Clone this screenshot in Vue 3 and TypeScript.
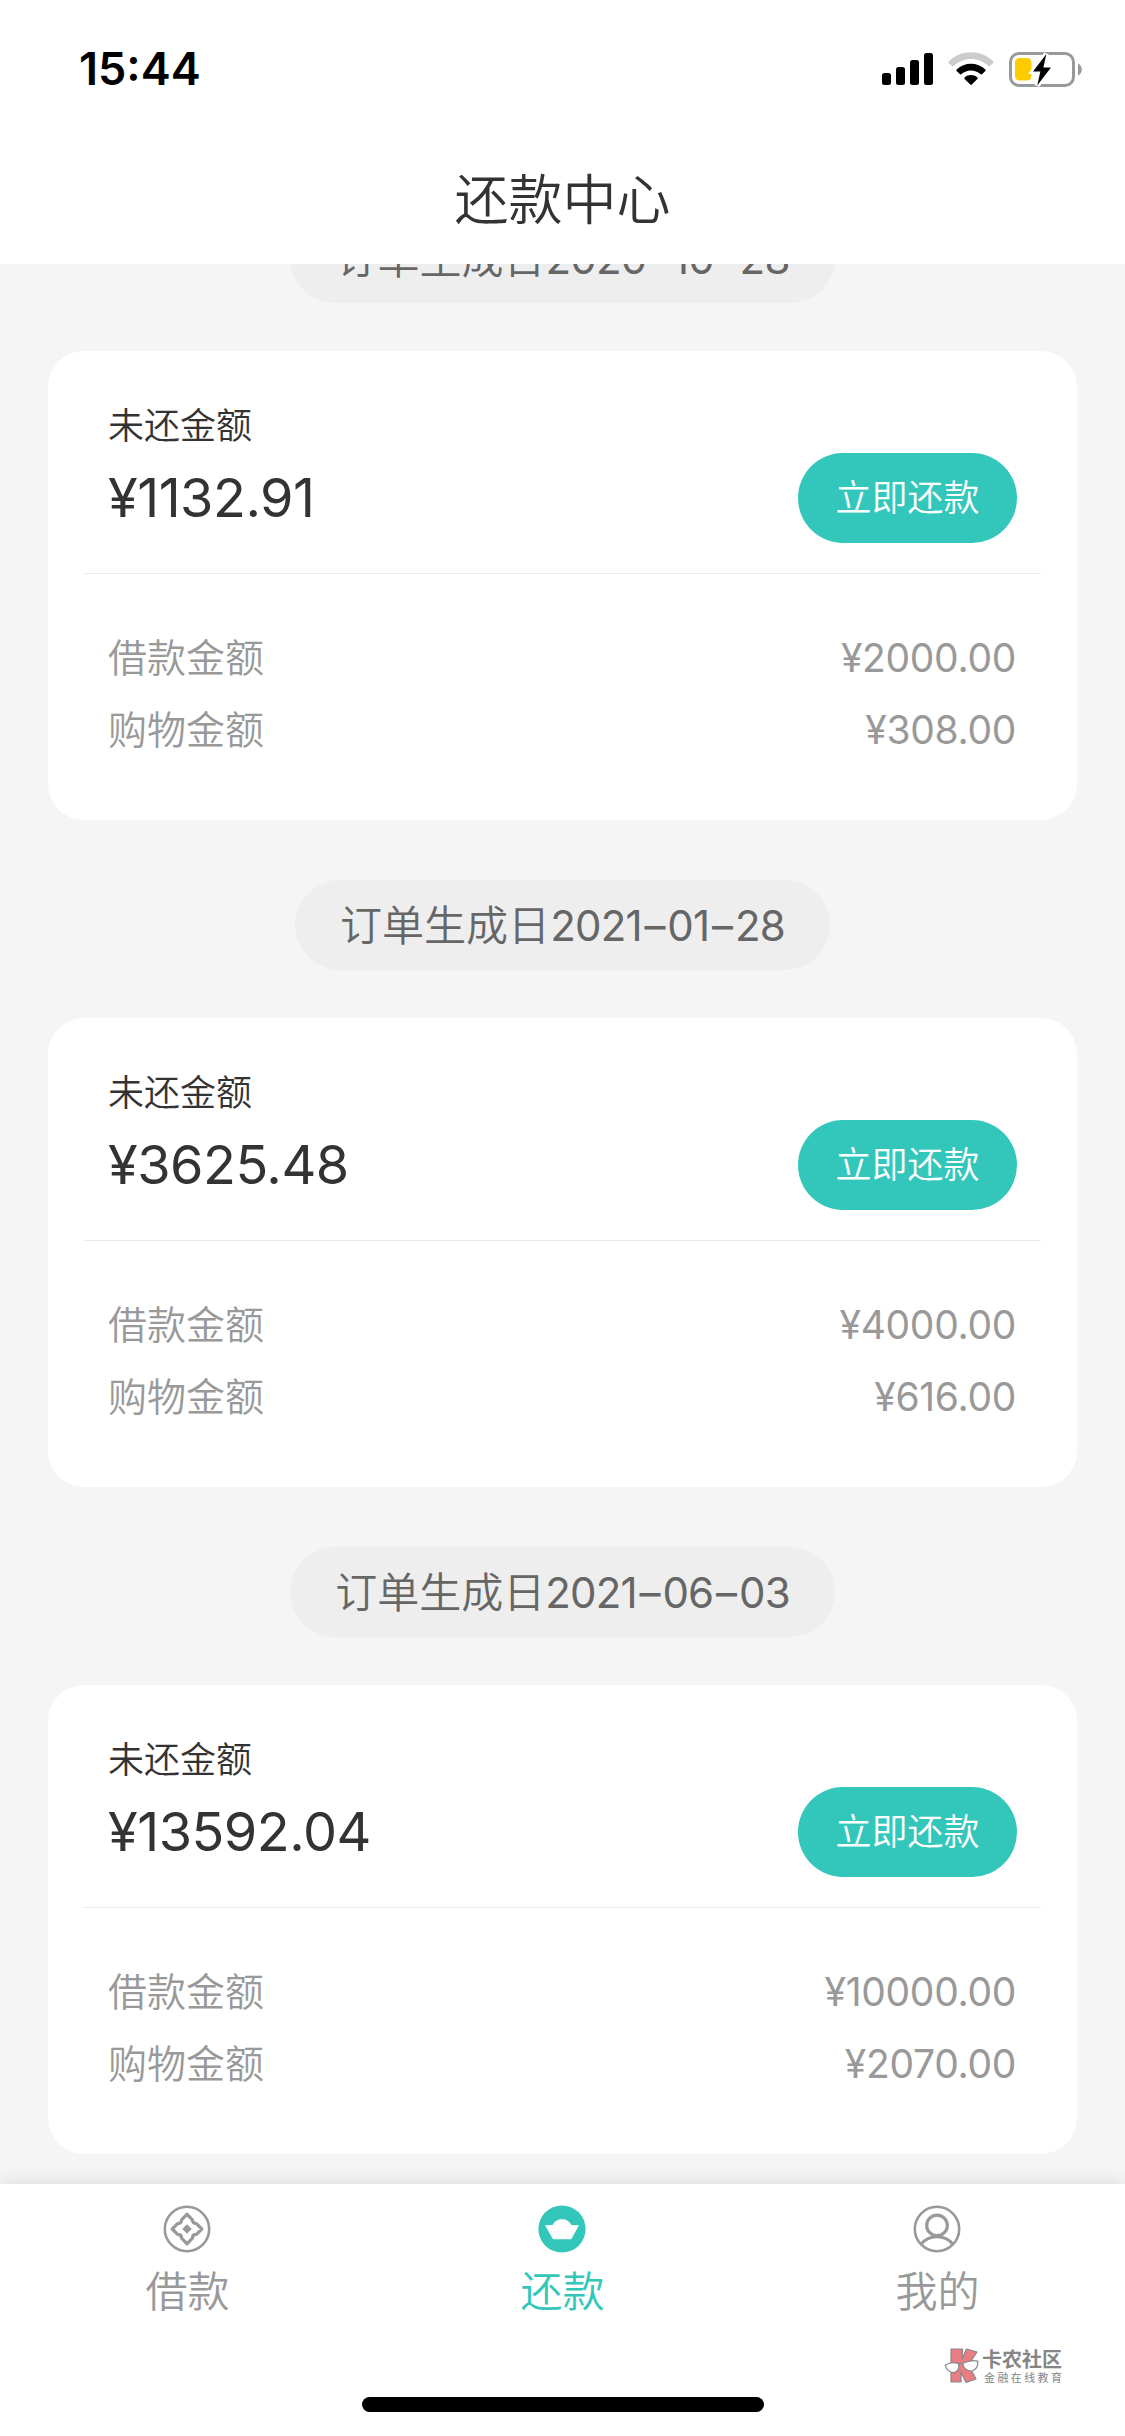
<script setup lang="ts">
interface Order {
  date: string[]
  unpaid: string
  loan: string
  shopping: string
}

const orders: Order[] = [
  { date: ['2020', '10', '28'], unpaid: '1132.91', loan: '2000.00', shopping: '308.00' },
  { date: ['2021', '01', '28'], unpaid: '3625.48', loan: '4000.00', shopping: '616.00' },
  { date: ['2021', '06', '03'], unpaid: '13592.04', loan: '10000.00', shopping: '2070.00' },
]
</script>

<template>
  <div class="screen">
    <header class="header">
      <div class="status">
        <span class="time">15:44</span>
        <div class="status-icons">
          <svg class="signal" width="51" height="34" viewBox="0 0 51 34">
            <rect x="0" y="21" width="9" height="12" rx="2.5" />
            <rect x="14" y="15" width="9" height="18" rx="2.5" />
            <rect x="28" y="8" width="9" height="25" rx="2.5" />
            <rect x="42" y="1" width="9" height="32" rx="2.5" />
          </svg>
          <svg class="wifi" width="46" height="34" viewBox="0 0 46 34">
            <path d="M0.6 9.4C13.2-2.9 32.8-2.9 45.4 9.4Q46.1 10.2 45.4 10.9L41.9 14.1Q41.1 14.7 40.3 14C30.6 4.7 15.4 4.7 5.7 14Q4.9 14.7 4.1 14.1L0.6 10.9Q-0.1 10.2 0.6 9.4Z" fill="#ccc" />
            <path d="M8.6 17.5C16.6 9.7 29.4 9.7 37.4 17.5Q38.1 18.2 37.4 18.9L34 22.2Q33.2 22.8 32.4 22.1C27.1 17.3 18.9 17.3 13.6 22.1Q12.8 22.8 12 22.2L8.6 18.9Q7.9 18.2 8.6 17.5Z" />
            <path d="M16.6 25.4C20.2 22.2 25.8 22.2 29.4 25.4Q30.1 26.1 29.4 26.9L23.8 32.4Q23 33.1 22.2 32.4L16.6 26.9Q15.9 26.1 16.6 25.4Z" />
          </svg>
          <svg class="battery" width="74" height="37" viewBox="0 0 74 37">
            <rect x="1.5" y="1.5" width="63" height="32" rx="8.5" fill="none" stroke="#999" stroke-width="3" />
            <path d="M69 11.5c5 2 5 10 0 12z" fill="#999" />
            <rect x="6" y="6" width="16.5" height="22.5" rx="4.5" fill="#ffcc00" />
            <path d="M37.4 2L24 19.6h7.4L28.2 33.6 42 15.4h-7.6z" fill="#000" stroke="#fff" stroke-width="5" paint-order="stroke" />
          </svg>
        </div>
      </div>
      <h1 class="title">还款中心</h1>
    </header>

    <main class="list">
      <section v-for="o in orders" :key="o.date.join('-')" class="order">
        <div class="pill">订单生成日<span class="date"><template v-for="(part, i) in o.date" :key="i"><span v-if="i > 0" class="dash">–</span>{{ part }}</template></span></div>
        <div class="card">
          <div class="summary">
            <div>
              <div class="label">未还金额</div>
              <div class="amount">¥{{ o.unpaid }}</div>
            </div>
            <button class="pay" type="button">立即还款</button>
          </div>
          <div class="details">
            <div class="row"><span>借款金额</span><span class="num">¥{{ o.loan }}</span></div>
            <div class="row"><span>购物金额</span><span class="num">¥{{ o.shopping }}</span></div>
          </div>
        </div>
      </section>
    </main>

    <footer class="footer">
      <nav class="tabs">
        <a class="tab">
          <svg width="48" height="48" viewBox="0 0 48 48" fill="none" stroke="#999">
            <circle cx="24" cy="24" r="22.2" stroke-width="2.6" />
            <path d="M24 9.2L29.4 14.8Q29.4 18.6 33.4 18.6L38.8 24L33.4 29.4Q29.4 29.4 29.4 33.2L24 38.8L18.6 33.2Q18.6 29.4 14.6 29.4L9.2 24L14.6 18.6Q18.6 18.6 18.6 14.8Z" stroke-width="3.2" stroke-linejoin="round" />
            <path d="M24 19.2L28.8 24L24 28.8L19.2 24Z" fill="#999" stroke="none" />
          </svg>
          <span>借款</span>
        </a>
        <a class="tab active">
          <svg width="48" height="48" viewBox="0 0 48 48">
            <circle cx="24" cy="24" r="23.6" fill="#33c7bc" />
            <path d="M7 20.3L14.6 20.1C18.2 12.2 29.8 12.2 33.4 20.1L41 20.3L33.2 34.2H15Z" fill="#fff" />
          </svg>
          <span>还款</span>
        </a>
        <a class="tab">
          <svg width="48" height="48" viewBox="0 0 48 48" fill="none" stroke="#999">
            <circle cx="24" cy="24" r="22.2" stroke-width="2.6" />
            <circle cx="24" cy="20.4" r="10.3" stroke-width="3.2" />
            <path d="M8 39.2C16 29.2 32 29.2 40 39.2" stroke-width="3" />
          </svg>
          <span>我的</span>
        </a>
      </nav>
      <div class="home-bar"></div>
      <div class="mark">
        <svg width="36" height="36" viewBox="0 0 36 36">
          <path d="M7 1H18.5L18 11L22.5 1L33 4L24.5 17L32 31L22 34.5L17 24V34H7Z" fill="#ea7c84" stroke="#888" stroke-width="1.2" stroke-linejoin="round" />
          <path d="M1.2 17.2Q7 13.2 14.6 15.6Q16 22.5 10.4 24.5Q3.5 25 1.2 17.2Z" fill="#fff" stroke="#888" stroke-width="1.2" />
          <path d="M18.6 15.6Q26 11.5 33.8 13.2Q34.5 21 27.6 23Q20.5 23.2 18.6 15.6Z" fill="#fff" stroke="#888" stroke-width="1.2" />
          <path d="M14.6 16.4Q16.6 14.8 18.6 16" fill="none" stroke="#888" stroke-width="1.2" />
        </svg>
        <div class="mark-text">
          <span class="mark-name">卡农社区</span>
          <span class="mark-sub">金融在线教育</span>
        </div>
      </div>
    </footer>
  </div>
</template>

<style>
body {
  margin: 0;
  background: #fff;
}
</style>

<style scoped>
.screen {
  display: flex;
  flex-direction: column;
  width: 1125px;
  height: 2436px;
  overflow: hidden;
  background: #f5f5f5;
  color: #333;
  font-family: Inter, "Noto Sans CJK SC", sans-serif;
  font-weight: 350;
}

.header {
  flex: none;
  height: 264px;
  background: #fff;
}

.status {
  display: flex;
  justify-content: space-between;
  height: 132px;
  padding: 0 42px 0 79px;
}

.time {
  height: 138px;
  line-height: 138px;
  font-size: 45px;
  font-weight: 600;
  color: #000;
}

.status-icons {
  display: flex;
  align-items: flex-start;
  padding-top: 52px;
}

.wifi {
  margin-left: 15px;
}

.battery {
  margin-left: 15px;
}

.title {
  margin: 0;
  padding-top: 3px;
  line-height: 132px;
  text-align: center;
  font-size: 54px;
  font-weight: 350;
}

.list {
  flex: 1;
  min-height: 0;
  overflow: hidden;
}

.order {
  display: flex;
  flex-direction: column;
  align-items: center;
  margin-bottom: 60px;
}

.order:first-child {
  margin-top: -51px;
}

.pill {
  height: 90px;
  padding: 0 45px;
  margin-bottom: 48px;
  border-radius: 45px;
  background: #eee;
  color: #666;
  font-size: 42px;
  line-height: 91px;
  white-space: nowrap;
}

.date {
  font-weight: 400;
  letter-spacing: -0.8px;
}

.dash {
  margin: 0 2.7px;
}

.card {
  box-sizing: border-box;
  width: 1029px;
  height: 469px;
  padding: 0 36px;
  border-radius: 36px;
  background: #fff;
}

.summary {
  display: flex;
  justify-content: space-between;
  box-sizing: border-box;
  height: 223px;
  padding: 49px 24px 0;
  border-bottom: 1px solid #ebebeb;
}

.label {
  font-size: 36px;
  line-height: 52px;
}

.amount {
  margin-top: 8px;
  font-size: 54px;
  line-height: 76px;
  font-weight: 400;
  letter-spacing: -0.5px;
}

.pay {
  width: 219px;
  height: 90px;
  margin-top: 53px;
  padding: 0;
  border: 0;
  border-radius: 45px;
  background: #33c7bc;
  color: #fff;
  font: inherit;
  font-size: 36px;
  line-height: 90px;
}

.details {
  padding: 48px 24px 0;
  color: #999;
}

.row {
  display: flex;
  justify-content: space-between;
  font-size: 39px;
  line-height: 71px;
  height: 72px;
}

.num {
  padding-right: 1px;
  font-weight: 400;
  letter-spacing: -0.3px;
}

.footer {
  position: relative;
  flex: none;
  height: 252px;
  background: #fff;
  box-shadow: 0 0 18px rgba(0, 0, 0, 0.12);
}

.tabs {
  display: flex;
}

.tab {
  flex: 1;
  display: flex;
  flex-direction: column;
  align-items: center;
  padding-top: 21px;
  color: #999;
  font-size: 42px;
  line-height: 60px;
}

.tab svg {
  margin: 0 1px 9px 0;
}

.tab.active {
  color: #33c7bc;
}

.home-bar {
  width: 402px;
  height: 15px;
  margin: 75px auto 0;
  border-radius: 8px;
  background: #000;
}

.mark {
  position: absolute;
  left: 944px;
  top: 164px;
  display: flex;
  color: #858585;
}

.mark-text {
  display: flex;
  flex-direction: column;
  margin-left: 2px;
  padding-top: 1px;
}

.mark-name {
  font-size: 20px;
  line-height: 22px;
  font-weight: 700;
}

.mark-sub {
  margin-left: 2px;
  font-size: 11px;
  line-height: 14px;
  letter-spacing: 2.4px;
  font-weight: 400;
}
</style>
